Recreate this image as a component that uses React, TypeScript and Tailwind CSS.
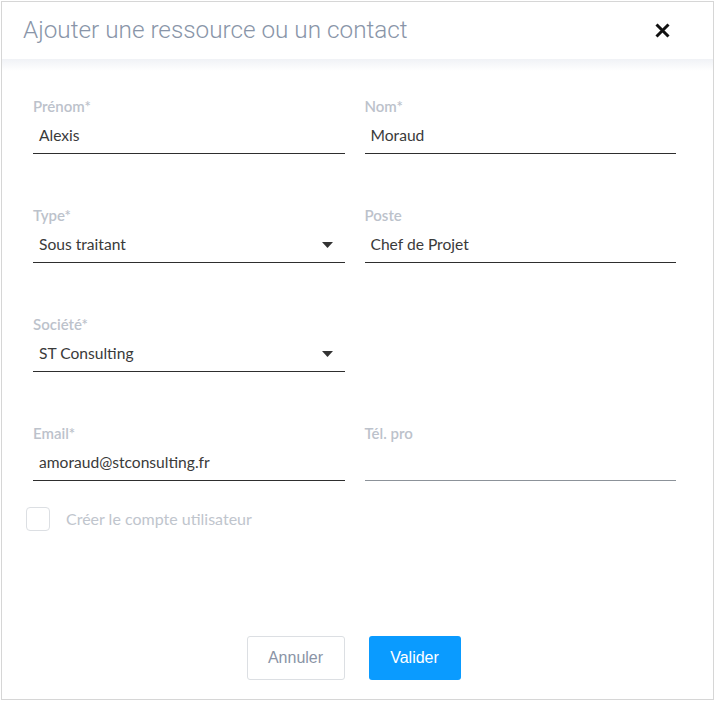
import React from 'react';

type FieldProps = {
	label: string;
	value?: string;
	select?: boolean;
	muted?: boolean;
};

function Field({ label, value, select, muted }: FieldProps) {
	return (
		<div className="flex flex-col">
			<label className="h-4 text-[15px] leading-4 font-semibold text-[#bcc2cb]">
				{label}
			</label>
			<div
				className={`mt-[4px] flex h-[36px] items-center justify-between border-b pl-[6px] pr-[12px] ${
					muted ? 'border-[#8c9299]' : 'border-[#2e2e2e]'
				}`}
			>
				<span className="text-[15.6px] text-[#3a3a3a]">{value}</span>
				{select && (
					<svg width="11" height="6" viewBox="0 0 11 6" className="mt-[1px]">
						<path d="M0 0h11L5.5 6z" fill="#333" />
					</svg>
				)}
			</div>
		</div>
	);
}

export default function App() {
	return (
		<div className="bg-white pl-px pt-px" style={{ fontFamily: 'Lato, "Noto Sans", sans-serif' }}>
			<div className="flex h-[699px] w-[713px] flex-col border border-[#d6d6d6] bg-white">
				<div className="flex h-[57px] shrink-0 items-center justify-between pl-[21px] pr-[43px]">
					<h1
						className="text-[24.3px] font-light text-[#8995a8]"
						style={{ fontFamily: 'Roboto, sans-serif' }}
					>
						Ajouter une ressource ou un contact
					</h1>
					<button type="button" className="text-black">
						<svg width="15" height="15" viewBox="0 0 15 15">
							<path d="M1.5 1.5l12 12M13.5 1.5l-12 12" stroke="#111" strokeWidth="3" />
						</svg>
					</button>
				</div>
				<div className="h-3 shrink-0 bg-gradient-to-b from-[#f0f2f6] to-white" />

				<div className="grid grid-cols-2 gap-x-5 gap-y-[53px] pl-[31px] pr-[37px] pt-[27px]">
					<Field label="Prénom*" value="Alexis" />
					<Field label="Nom*" value="Moraud" />
					<Field label="Type*" value="Sous traitant" select />
					<Field label="Poste" value="Chef de Projet" />
					<Field label="Société*" value="ST Consulting" select />
					<div />
					<Field label="Email*" value="amoraud@stconsulting.fr" />
					<Field label="Tél. pro" muted />
				</div>

				<div className="mt-[26px] flex items-center gap-4 pl-[24px]">
					<span className="h-6 w-6 rounded-[4px] border border-[#dcdfe3]" />
					<span className="text-[16px] text-[#c0c5cd]">Créer le compte utilisateur</span>
				</div>

				<div
					className="mt-auto mb-[19px] flex justify-center gap-6 pr-[8px]"
					style={{ fontFamily: '"Liberation Sans", Arial, sans-serif' }}
				>
					<button
						type="button"
						className="h-[44px] w-[98px] rounded-[3px] border border-[#dcdfe3] text-[16px] text-[#8a94a6]"
					>
						Annuler
					</button>
					<button
						type="button"
						className="h-[44px] w-[92px] rounded-[3px] bg-[#0a9bff] text-[16px] text-white"
					>
						Valider
					</button>
				</div>
			</div>
		</div>
	);
}
